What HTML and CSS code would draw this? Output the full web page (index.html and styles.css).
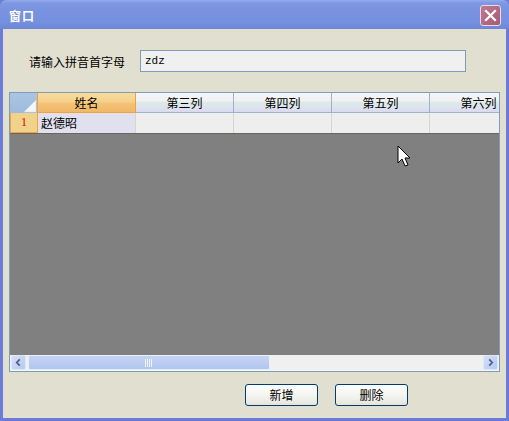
FILE: index.html
```html
<!DOCTYPE html>
<html>
<head>
<meta charset="utf-8">
<link rel="stylesheet" href="styles.css">
</head>
<body>
<div class="window">
  <div class="titlebar">
    <span class="title">窗口</span>
    <span class="close"><svg width="13" height="13" viewBox="0 0 13 13"><path d="M2 2 L11 11 M11 2 L2 11" stroke="#fff" stroke-width="2.2" stroke-linecap="square"/></svg></span>
  </div>
  <div class="client">
    <div class="form-row">
      <span class="label">请输入拼音首字母</span>
      <div class="input">zdz</div>
    </div>
    <div class="grid">
      <div class="hrow">
        <div class="corner"><svg width="16" height="14" viewBox="0 0 16 14"><polygon points="15,1 15,13 3,13" fill="#f4f6f8"/><polygon points="15,1 15,13 3,13" fill="none" stroke="#c8d8e8" stroke-width="0.5"/></svg></div>
        <div class="hcell sel">姓名</div>
        <div class="hcell">第三列</div>
        <div class="hcell">第四列</div>
        <div class="hcell">第五列</div>
        <div class="hcell">第六列</div>
      </div>
      <div class="drow">
        <div class="rowhdr">1</div>
        <div class="dcell cur">赵德昭</div>
        <div class="dcell"></div>
        <div class="dcell"></div>
        <div class="dcell"></div>
        <div class="dcell"></div>
      </div>
      <div class="empty">
        <svg class="cursor" width="14" height="24" viewBox="0 0 14 24"><path d="M1 1 L1 18 L5 14 L8 21 L11 20 L8 13 L13 13 Z" fill="#fff" stroke="#000" stroke-width="1" stroke-linejoin="miter"/></svg>
      </div>
      <div class="hscroll">
        <div class="sbtn"><svg width="15" height="15" viewBox="0 0 15 15"><path d="M9 4 L5.5 7.5 L9 11" fill="none" stroke="#4d6185" stroke-width="2"/></svg></div>
        <div class="thumb"><svg width="8" height="8" viewBox="0 0 8 8"><path d="M0.5 0 V8 M2.5 0 V8 M4.5 0 V8 M6.5 0 V8" stroke="#eef3fc" stroke-width="1"/></svg></div>
        <div class="track"></div>
        <div class="sbtn"><svg width="15" height="15" viewBox="0 0 15 15"><path d="M6 4 L9.5 7.5 L6 11" fill="none" stroke="#4d6185" stroke-width="2"/></svg></div>
      </div>
    </div>
    <div class="buttons">
      <button class="btn">新增</button>
      <button class="btn">删除</button>
    </div>
  </div>
</div>
</body>
</html>
```
FILE: styles.css
```css
html, body {
  margin: 0;
  padding: 0;
  width: 509px;
  height: 421px;
  overflow: hidden;
  background: #e0dfd0;
}
body {
  font-family: "Noto Sans CJK SC", "DejaVu Sans", sans-serif;
  font-size: 12px;
  color: #000;
}
.window {
  width: 509px;
  height: 421px;
  box-sizing: border-box;
  display: flex;
  flex-direction: column;
  background: #6a7cd8;
}
.titlebar {
  height: 29px;
  flex: none;
  display: flex;
  align-items: center;
  justify-content: space-between;
  padding: 0 8px 0 9px;
  background: linear-gradient(#95aaea 0px, #7d97e2 3px, #7892df 12px, #7590de 22px, #6e86d8 29px);
  border-top-left-radius: 6px;
  border-top-right-radius: 6px;
}
.title {
  color: #fff;
  font-weight: bold;
  font-size: 12px;
  letter-spacing: 1px;
  margin-top: 2px;
}
.close {
  width: 19px;
  height: 19px;
  border: 1px solid #e8d8e8;
  border-radius: 3px;
  background: linear-gradient(135deg, #c07a90, #a85a72);
  display: flex;
  align-items: center;
  justify-content: center;
  margin-top: 1px;
}
.client {
  flex: 1;
  margin: 0 3px 3px 3px;
  background: #e0dfd0;
  display: flex;
  flex-direction: column;
  padding: 21px 6px 0 6px;
}
.form-row {
  display: flex;
  align-items: center;
  height: 22px;
}
.label {
  margin-left: 20px;
  width: 111px;
  font-size: 12px;
}
.input {
  height: 20px;
  border: 1px solid #7f9db9;
  background: #f0f0f0;
  font-family: "Liberation Mono", monospace;
  font-size: 11px;
  line-height: 20px;
  padding-left: 4px;
  box-sizing: content-box;
  width: 320px;
}
.grid {
  margin-top: 20px;
  width: 491px;
  height: 280px;
  box-sizing: border-box;
  border: 1px solid #7f9db9;
  display: flex;
  flex-direction: column;
  overflow: hidden;
  background: #808080;
}
.hrow {
  display: flex;
  height: 20px;
  flex: none;
}
.corner {
  width: 28px;
  flex: none;
  box-sizing: border-box;
  background: linear-gradient(#a9c5e3, #9fbbdc);
  border-right: 1px solid #f2a040;
  display: flex;
  align-items: flex-end;
  justify-content: flex-end;
}
.hcell {
  width: 98px;
  flex: none;
  box-sizing: border-box;
  border-right: 1px solid #9fb2c8;
  border-bottom: 1px solid #9fb2c8;
  background: linear-gradient(#f4f5f6 0%, #eff1f4 40%, #dceae8 50%, #dfe2ef 75%, #d9dbee 100%);
  text-align: center;
  line-height: 19px;
  font-size: 12px;
}
.hcell.sel {
  background: linear-gradient(#f8dc9c 0%, #f6d08c 45%, #f3c377 55%, #f0b866 100%);
  border: 1px solid #f2a040;
  border-top: none;
  border-left: none;
  border-bottom: 1px solid #f2a040;
}
.drow {
  display: flex;
  height: 20px;
  flex: none;
  border-bottom: 1px solid #6a6560;
}
.rowhdr {
  width: 28px;
  flex: none;
  box-sizing: border-box;
  background: #f1d28a;
  border: 1px solid #f2a040;
  border-top: none;
  color: #e00000;
  font-family: "Liberation Serif", serif;
  font-size: 12px;
  text-align: center;
  line-height: 19px;
}
.dcell {
  width: 98px;
  flex: none;
  box-sizing: border-box;
  background: #eeeeee;
  border-right: 1px solid #d6d6cc;
  line-height: 20px;
  padding-left: 3px;
  font-size: 12px;
}
.dcell.cur {
  background: #e1e0ef;
}
.empty {
  flex: 1;
  background: #808080;
  position: relative;
}
.cursor {
  position: absolute;
  left: 387px;
  top: 11px;
}
.hscroll {
  height: 16px;
  flex: none;
  display: flex;
  background: #f0f0f0;
  padding: 0 1px;
  box-sizing: border-box;
  border-bottom: 1px solid #f4f4f0;
}
.sbtn {
  width: 15px;
  height: 15px;
  flex: none;
  box-sizing: border-box;
  border: 1px solid #e0e8f8;
  border-radius: 2px;
  background: linear-gradient(135deg, #d4e0fb, #b6c9f1);
  display: flex;
  align-items: center;
  justify-content: center;
}
.sbtn svg { display: block; }
.thumb {
  width: 242px;
  flex: none;
  height: 15px;
  box-sizing: border-box;
  margin-left: 2px;
  border: 1px solid #e8eefa;
  border-radius: 2px;
  background: linear-gradient(#c4d4f4, #bccdf1 50%, #b2c5ee);
  display: flex;
  align-items: center;
  justify-content: center;
}
.track {
  flex: 1;
}
.buttons {
  display: flex;
  margin-top: 12px;
  padding-left: 236px;
  gap: 17px;
}
.btn {
  width: 73px;
  height: 22px;
  box-sizing: border-box;
  border: 1px solid #003c74;
  border-radius: 3px;
  background: linear-gradient(#fdfdfb, #f3f3ee 60%, #e6e4d8);
  font-family: "Noto Sans CJK SC", sans-serif;
  font-size: 12px;
  padding: 0;
  line-height: 18px;
  color: #000;
}
```
